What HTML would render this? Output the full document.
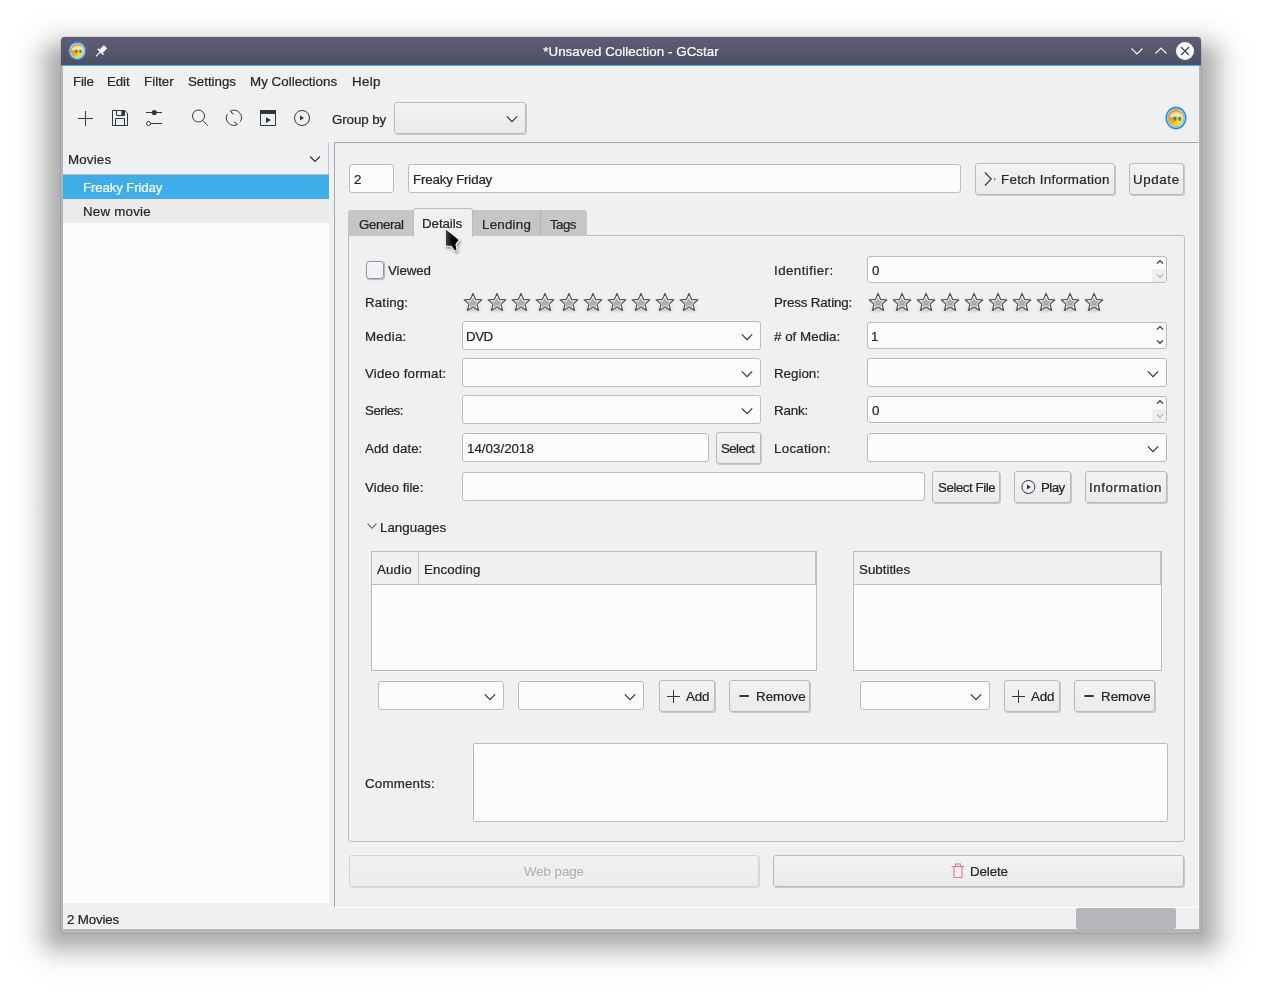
<!DOCTYPE html>
<html lang="en">
<head>
<meta charset="utf-8">
<title>*Unsaved Collection - GCstar</title>
<style>
*{box-sizing:border-box;margin:0;padding:0}
html,body{width:1262px;height:994px;overflow:hidden;background:#fff}
body{position:relative;font-family:"Liberation Sans",sans-serif;font-size:13.33px;color:#232627;line-height:16px}
.abs{position:absolute}
.t{position:absolute;white-space:pre;height:16px;line-height:16px;will-change:transform;-webkit-text-stroke:.22px}
#frame{left:61px;top:37px;width:1140px;height:896px;border-radius:4px 4px 3px 3px;background:#b2b5ba;box-shadow:0 0 0 1px rgba(0,0,0,.085)}
#titlebar{left:61px;top:37px;width:1140px;height:29px;border-radius:4px 4px 0 0;background:linear-gradient(#5e5f76,#4e4f63);border-bottom:1px solid #3daee9}
#win{left:63px;top:66px;width:1136px;height:863px;background:#eff0f1}
.entry{background:#fcfcfc;border:1px solid #bbbcbe;border-radius:3px}
.btn{border:1px solid #b9babc;border-radius:3px;background:linear-gradient(#f2f3f4,#e9eaeb);box-shadow:1px 1px 0 rgba(0,0,0,.16)}
</style>
</head>
<body>
<div class="abs" style="left:0px;top:64px;width:64px;height:866px;background:linear-gradient(to left,rgba(0,0,0,0.310) 0px,rgba(0,0,0,0.302) 4px,rgba(0,0,0,0.280) 8px,rgba(0,0,0,0.248) 12px,rgba(0,0,0,0.208) 16px,rgba(0,0,0,0.166) 20px,rgba(0,0,0,0.126) 24px,rgba(0,0,0,0.091) 28px,rgba(0,0,0,0.063) 32px,rgba(0,0,0,0.041) 36px,rgba(0,0,0,0.025) 40px,rgba(0,0,0,0.015) 44px,rgba(0,0,0,0.008) 48px,rgba(0,0,0,0.005) 52px,rgba(0,0,0,0.002) 56px,rgba(0,0,0,0.001) 60px,rgba(0,0,0,0.000) 64px)"></div>
<div class="abs" style="left:1198px;top:64px;width:64px;height:866px;background:linear-gradient(to right,rgba(0,0,0,0.310) 0px,rgba(0,0,0,0.302) 4px,rgba(0,0,0,0.280) 8px,rgba(0,0,0,0.248) 12px,rgba(0,0,0,0.208) 16px,rgba(0,0,0,0.166) 20px,rgba(0,0,0,0.126) 24px,rgba(0,0,0,0.091) 28px,rgba(0,0,0,0.063) 32px,rgba(0,0,0,0.041) 36px,rgba(0,0,0,0.025) 40px,rgba(0,0,0,0.015) 44px,rgba(0,0,0,0.008) 48px,rgba(0,0,0,0.005) 52px,rgba(0,0,0,0.002) 56px,rgba(0,0,0,0.001) 60px,rgba(0,0,0,0.000) 64px)"></div>
<div class="abs" style="left:64px;top:0px;width:1134px;height:64px;background:linear-gradient(to top,rgba(0,0,0,0.310) 0px,rgba(0,0,0,0.302) 4px,rgba(0,0,0,0.280) 8px,rgba(0,0,0,0.248) 12px,rgba(0,0,0,0.208) 16px,rgba(0,0,0,0.166) 20px,rgba(0,0,0,0.126) 24px,rgba(0,0,0,0.091) 28px,rgba(0,0,0,0.063) 32px,rgba(0,0,0,0.041) 36px,rgba(0,0,0,0.025) 40px,rgba(0,0,0,0.015) 44px,rgba(0,0,0,0.008) 48px,rgba(0,0,0,0.005) 52px,rgba(0,0,0,0.002) 56px,rgba(0,0,0,0.001) 60px,rgba(0,0,0,0.000) 64px)"></div>
<div class="abs" style="left:64px;top:930px;width:1134px;height:64px;background:linear-gradient(to bottom,rgba(0,0,0,0.310) 0px,rgba(0,0,0,0.302) 4px,rgba(0,0,0,0.280) 8px,rgba(0,0,0,0.248) 12px,rgba(0,0,0,0.208) 16px,rgba(0,0,0,0.166) 20px,rgba(0,0,0,0.126) 24px,rgba(0,0,0,0.091) 28px,rgba(0,0,0,0.063) 32px,rgba(0,0,0,0.041) 36px,rgba(0,0,0,0.025) 40px,rgba(0,0,0,0.015) 44px,rgba(0,0,0,0.008) 48px,rgba(0,0,0,0.005) 52px,rgba(0,0,0,0.002) 56px,rgba(0,0,0,0.001) 60px,rgba(0,0,0,0.000) 64px)"></div>
<div class="abs" style="left:0px;top:0px;width:64px;height:64px;background:radial-gradient(circle 64px at 100% 100%,rgba(0,0,0,0.310) 0px,rgba(0,0,0,0.302) 4px,rgba(0,0,0,0.280) 8px,rgba(0,0,0,0.248) 12px,rgba(0,0,0,0.208) 16px,rgba(0,0,0,0.166) 20px,rgba(0,0,0,0.126) 24px,rgba(0,0,0,0.091) 28px,rgba(0,0,0,0.063) 32px,rgba(0,0,0,0.041) 36px,rgba(0,0,0,0.025) 40px,rgba(0,0,0,0.015) 44px,rgba(0,0,0,0.008) 48px,rgba(0,0,0,0.005) 52px,rgba(0,0,0,0.002) 56px,rgba(0,0,0,0.001) 60px,rgba(0,0,0,0.000) 64px)"></div>
<div class="abs" style="left:1198px;top:0px;width:64px;height:64px;background:radial-gradient(circle 64px at 0 100%,rgba(0,0,0,0.310) 0px,rgba(0,0,0,0.302) 4px,rgba(0,0,0,0.280) 8px,rgba(0,0,0,0.248) 12px,rgba(0,0,0,0.208) 16px,rgba(0,0,0,0.166) 20px,rgba(0,0,0,0.126) 24px,rgba(0,0,0,0.091) 28px,rgba(0,0,0,0.063) 32px,rgba(0,0,0,0.041) 36px,rgba(0,0,0,0.025) 40px,rgba(0,0,0,0.015) 44px,rgba(0,0,0,0.008) 48px,rgba(0,0,0,0.005) 52px,rgba(0,0,0,0.002) 56px,rgba(0,0,0,0.001) 60px,rgba(0,0,0,0.000) 64px)"></div>
<div class="abs" style="left:0px;top:930px;width:64px;height:64px;background:radial-gradient(circle 64px at 100% 0,rgba(0,0,0,0.310) 0px,rgba(0,0,0,0.302) 4px,rgba(0,0,0,0.280) 8px,rgba(0,0,0,0.248) 12px,rgba(0,0,0,0.208) 16px,rgba(0,0,0,0.166) 20px,rgba(0,0,0,0.126) 24px,rgba(0,0,0,0.091) 28px,rgba(0,0,0,0.063) 32px,rgba(0,0,0,0.041) 36px,rgba(0,0,0,0.025) 40px,rgba(0,0,0,0.015) 44px,rgba(0,0,0,0.008) 48px,rgba(0,0,0,0.005) 52px,rgba(0,0,0,0.002) 56px,rgba(0,0,0,0.001) 60px,rgba(0,0,0,0.000) 64px)"></div>
<div class="abs" style="left:1198px;top:930px;width:64px;height:64px;background:radial-gradient(circle 64px at 0 0,rgba(0,0,0,0.310) 0px,rgba(0,0,0,0.302) 4px,rgba(0,0,0,0.280) 8px,rgba(0,0,0,0.248) 12px,rgba(0,0,0,0.208) 16px,rgba(0,0,0,0.166) 20px,rgba(0,0,0,0.126) 24px,rgba(0,0,0,0.091) 28px,rgba(0,0,0,0.063) 32px,rgba(0,0,0,0.041) 36px,rgba(0,0,0,0.025) 40px,rgba(0,0,0,0.015) 44px,rgba(0,0,0,0.008) 48px,rgba(0,0,0,0.005) 52px,rgba(0,0,0,0.002) 56px,rgba(0,0,0,0.001) 60px,rgba(0,0,0,0.000) 64px)"></div>
<div class="abs" id="frame"></div>
<div class="abs" id="titlebar"></div>
<div class="abs" id="win"></div>
<svg class="abs" width="0" height="0" style="left:0;top:0"><defs>
<linearGradient id="sg" x1="0.1" y1="0.25" x2="0.8" y2="0.9"><stop offset="0" stop-color="#ff8400"/><stop offset=".5" stop-color="#ffae00"/><stop offset=".8" stop-color="#ffdd22"/><stop offset="1" stop-color="#ffe21a"/></linearGradient>
<linearGradient id="sh" x1="0" y1="0" x2="0" y2="1"><stop offset="0" stop-color="#fff" stop-opacity=".55"/><stop offset="1" stop-color="#fff" stop-opacity=".8"/></linearGradient>
<g id="sonny"><circle cx="12" cy="12" r="9.75" fill="#eaf4ff" stroke="#1e88f0" stroke-width="1.5"/>
<circle cx="12" cy="12" r="8.1" fill="none" stroke="#3a96f2" stroke-width=".8"/>
<circle cx="12" cy="12" r="7.5" fill="url(#sg)"/>
<path d="M5.4 11.6 A6.7 6.7 0 0 1 18.6 11.6 C15 10.6 9 10.6 5.4 11.6 Z" fill="url(#sh)"/>
<ellipse cx="10.9" cy="12.6" rx="1.3" ry="2" fill="#1c80ea"/>
<ellipse cx="15.7" cy="12.6" rx="1.3" ry="2" fill="#1c80ea"/></g>
<linearGradient id="stg" x1="0" y1="0" x2="0" y2="1"><stop offset="0" stop-color="#d0d0d0"/><stop offset=".5" stop-color="#adadad"/><stop offset="1" stop-color="#a4a4a4"/></linearGradient>
<radialGradient id="sts" cx=".5" cy=".5" r=".5"><stop offset="0" stop-color="#000" stop-opacity=".13"/><stop offset=".6" stop-color="#000" stop-opacity=".07"/><stop offset="1" stop-color="#000" stop-opacity="0"/></radialGradient>
<g id="star"><ellipse cx="11" cy="18.6" rx="10" ry="4.2" fill="url(#sts)"/>
<path d="M11 2.4 L13.5 8.35 L19.9 8.9 L15.05 13.1 L16.5 19.4 L11 16.05 L5.5 19.4 L6.95 13.1 L2.1 8.9 L8.5 8.35 Z" fill="url(#stg)" stroke="#585858" stroke-width="1.25" stroke-linejoin="round"/>
<path d="M11 5.2 L12.75 9.4 L17.2 9.8 L13.8 12.7 L14.85 17.1 L11 14.75 L7.15 17.1 L8.2 12.7 L4.8 9.8 L9.25 9.4 Z" fill="none" stroke="#fff" stroke-opacity=".75" stroke-width=".9" stroke-linejoin="round"/></g>
</defs></svg>
<!-- title bar -->
<svg class="abs" style="left:67.1px;top:40.3px" width="20.6" height="21.7" viewBox="0 0 24 24" preserveAspectRatio="none"><use href="#sonny"/></svg>
<svg class="abs" style="left:92px;top:42px" width="18" height="18" viewBox="0 0 18 18"><g transform="translate(-0.4 0.7) rotate(45 9 9) translate(9 9) scale(.9) translate(-9 -9)" fill="#fcfcfc"><rect x="6.4" y="1.2" width="5.2" height="7.2" rx=".6"/><rect x="4.4" y="8.2" width="9.2" height="1.6"/><rect x="8.3" y="9.6" width="1.4" height="6.8"/></g></svg>
<div class="t" style="left:61px;top:44px;color:#fcfcfc;width:1140px;text-align:center;letter-spacing:.05px">*Unsaved Collection - GCstar</div>
<svg class="abs" style="left:1128px;top:42px" width="18" height="18" viewBox="0 0 18 18"><path d="M3.5 6.5 L9 12 L14.5 6.5" fill="none" stroke="#fcfcfc" stroke-width="1.1"/></svg>
<svg class="abs" style="left:1152px;top:42px" width="18" height="18" viewBox="0 0 18 18"><path d="M3.5 11.5 L9 6 L14.5 11.5" fill="none" stroke="#fcfcfc" stroke-width="1.1"/></svg>
<svg class="abs" style="left:1176px;top:42px" width="18" height="18" viewBox="0 0 18 18"><circle cx="9" cy="9" r="9" fill="#fcfcfc"/><path d="M5 5 L13 13 M13 5 L5 13" fill="none" stroke="#3b3c4e" stroke-width="1.1"/></svg>
<!-- menu bar -->
<div class="t" style="left:72.50px;top:74px;letter-spacing:-0.188px">File</div>
<div class="t" style="left:106.50px;top:74px;letter-spacing:-0.121px">Edit</div>
<div class="t" style="left:143.50px;top:74px;letter-spacing:0.024px">Filter</div>
<div class="t" style="left:188.40px;top:74px;letter-spacing:-0.028px">Settings</div>
<div class="t" style="left:250.40px;top:74px;letter-spacing:0.039px">My Collections</div>
<div class="t" style="left:351.50px;top:74px;letter-spacing:0.334px">Help</div>
<!-- toolbar -->
<svg class="abs" style="left:70px;top:100px" width="250" height="36" viewBox="70 100 250 36"><path d="M85.5 111 V126 M78 118.5 H93" stroke="#31363b" stroke-width="1" fill="none"/><path d="M112.5 110.5 H124.8 L127.5 113.2 V125.5 H112.5 Z M116.5 110.5 V115.5 H124.5 V110.5 M115.5 125.5 V118.5 H124.5 V125.5" stroke="#31363b" stroke-width="1" fill="none"/><rect x="121.3" y="111" width="2.7" height="4.2" fill="#31363b"/><path d="M146 112.5 H162 M151 123.5 H162" stroke="#31363b" stroke-width="1" fill="none"/><circle cx="154.3" cy="112.5" r="2.6" fill="#31363b"/><circle cx="148.5" cy="123.5" r="2" stroke="#31363b" stroke-width="1" fill="none"/><circle cx="198.5" cy="116" r="6" stroke="#31363b" stroke-width="1" fill="none"/><path d="M202.6 120.3 L208 125.8" stroke="#31363b" stroke-width="1" fill="none"/><path d="M233.8 114.3 L230.15 111.3 A7.5 7.5 0 0 1 240.33 121.66 M227.32 114.2 A7.5 7.5 0 0 0 237.49 124.38 L234.2 121.8" stroke="#31363b" stroke-width="1" fill="none"/><rect x="260.5" y="110.5" width="15" height="15" stroke="#31363b" stroke-width="1" fill="none"/><rect x="260" y="110" width="16" height="4" fill="#31363b"/><path d="M266 117.2 L271 120.1 L266 123 Z" fill="#31363b"/><circle cx="302" cy="118" r="7.5" stroke="#31363b" stroke-width="1" fill="none"/><path d="M300 115.4 L304 118 L300 120.6 Z" fill="#31363b"/></svg>
<div class="t" style="left:331.60px;top:112px;letter-spacing:-0.094px">Group by</div>
<div class="abs btn" style="left:394px;top:102px;width:132px;height:32px;"></div>
<svg class="abs" style="left:504px;top:110.7px" width="16" height="16" viewBox="0 0 16 16"><path d="M2.8 5.4 L8 10.6 L13.2 5.4" fill="none" stroke="#31363b" stroke-width="1.2"/></svg>
<svg class="abs" style="left:1164.3px;top:104.8px" width="24" height="26" viewBox="0 0 24 24" preserveAspectRatio="none"><use href="#sonny"/></svg>
<!-- left panel -->
<div class="abs" style="left:63px;top:143px;width:266px;height:760px;background:#fcfcfc"></div>
<div class="abs" style="left:63px;top:143px;width:266px;height:32px;background:#eff0f1;border-bottom:1px solid #b9babc"></div>
<div class="t" style="left:68.30px;top:152px;letter-spacing:0.169px">Movies</div>
<svg class="abs" style="left:307px;top:150.5px" width="16" height="16" viewBox="0 0 16 16"><path d="M3 5.5 L8 10.5 L13 5.5" fill="none" stroke="#31363b" stroke-width="1.2"/></svg>
<div class="abs" style="left:63px;top:175px;width:266px;height:24px;background:#3daee9"></div>
<div class="t" style="left:82.50px;top:180px;letter-spacing:-0.175px;color:#fcfcfc">Freaky Friday</div>
<div class="abs" style="left:63px;top:199px;width:266px;height:24px;background:#ebebeb"></div>
<div class="t" style="left:82.50px;top:204px;letter-spacing:0.224px">New movie</div>
<div class="abs" style="left:328px;top:142px;width:1px;height:32px;background:#c4c6c9"></div>
<div class="abs" style="left:334px;top:142px;width:865px;height:766px;border-left:1px solid #a6a9ad;border-top:1px solid #a6a9ad;border-right:1px solid #fff;border-bottom:1px solid #fff;background:#eff0f1"></div>
<!-- item header -->
<div class="abs entry" style="left:349px;top:164px;width:45px;height:29px;"></div>
<div class="t" style="left:353.90px;top:172px">2</div>
<div class="abs entry" style="left:408px;top:164px;width:553px;height:29px;"></div>
<div class="t" style="left:412.90px;top:172px;letter-spacing:-0.183px">Freaky Friday</div>
<div class="abs btn" style="left:975px;top:163px;width:140px;height:32px;"></div>
<svg class="abs" style="left:981px;top:171px" width="16" height="16" viewBox="0 0 16 16"><path d="M3.9 1.5 L10.3 8 L3.9 14.5" fill="none" stroke="#31363b" stroke-width="1.1"/><rect x="13" y="7.4" width="1.3" height="1.3" fill="#31363b"/></svg>
<div class="t" style="left:1001.40px;top:172px;letter-spacing:0.288px">Fetch Information</div>
<div class="abs btn" style="left:1129px;top:163px;width:55px;height:32px;"></div>
<div class="t" style="left:1133.40px;top:172px;letter-spacing:0.627px">Update</div>
<!-- notebook -->
<div class="abs" style="left:348px;top:235px;width:837px;height:607px;border:1px solid #bbbcbe;border-radius:0 3px 3px 3px"></div>
<div class="abs" style="left:348px;top:210px;width:66px;height:26px;background:#c5c6c8;border-radius:3px 0 0 0"></div>
<div class="abs" style="left:472px;top:210px;width:69px;height:26px;background:#c5c6c8;border-right:1px solid #b2b3b5"></div>
<div class="abs" style="left:541px;top:210px;width:46px;height:26px;background:#c5c6c8;border-radius:0 3px 0 0"></div>
<div class="abs" style="left:413px;top:208px;width:60px;height:29px;background:#eff0f1;border:1px solid #bbbcbe;border-bottom:none;border-radius:3px 3px 0 0"></div>
<div class="t" style="left:358.50px;top:217px;letter-spacing:-0.409px">General</div>
<div class="t" style="left:422.40px;top:216px;letter-spacing:-0.079px">Details</div>
<div class="t" style="left:481.60px;top:217px;letter-spacing:0.229px">Lending</div>
<div class="t" style="left:550.10px;top:217px;letter-spacing:-0.563px">Tags</div>
<!-- details form -->
<div class="abs" style="left:366px;top:261px;width:17.5px;height:17.5px;border:1px solid #90949a;border-radius:3.5px;background:linear-gradient(#f3f4f5,#eeeff0);box-shadow:.7px .7px 1px rgba(0,0,0,.25)"></div>
<div class="t" style="left:388.10px;top:263px;letter-spacing:-0.112px">Viewed</div>
<div class="t" style="left:773.50px;top:263px;letter-spacing:0.438px">Identifier:</div>
<div class="abs entry" style="left:867px;top:256px;width:300px;height:27px;"></div>
<div class="abs" style="left:1152px;top:269.0px;width:14px;height:13.0px;background:#eeeff0;border-radius:0 0 2px 0"></div>
<svg class="abs" style="left:1155px;top:258.0px" width="10" height="8" viewBox="0 0 10 8"><path d="M2 5.6 L5 2.6 L8 5.6" fill="none" stroke="#31363b" stroke-width="1.3"/></svg>
<svg class="abs" style="left:1155px;top:271.5px" width="10" height="8" viewBox="0 0 10 8"><path d="M2 2.4 L5 5.4 L8 2.4" fill="none" stroke="#b3b4b6" stroke-width="1.3"/></svg>
<div class="t" style="left:871.50px;top:263px">0</div>
<div class="t" style="left:364.50px;top:295px;letter-spacing:0.129px">Rating:</div>
<svg class="abs" style="left:462px;top:291px" width="22" height="24" viewBox="0 0 22 24"><use href="#star"/></svg>
<svg class="abs" style="left:486px;top:291px" width="22" height="24" viewBox="0 0 22 24"><use href="#star"/></svg>
<svg class="abs" style="left:510px;top:291px" width="22" height="24" viewBox="0 0 22 24"><use href="#star"/></svg>
<svg class="abs" style="left:534px;top:291px" width="22" height="24" viewBox="0 0 22 24"><use href="#star"/></svg>
<svg class="abs" style="left:558px;top:291px" width="22" height="24" viewBox="0 0 22 24"><use href="#star"/></svg>
<svg class="abs" style="left:582px;top:291px" width="22" height="24" viewBox="0 0 22 24"><use href="#star"/></svg>
<svg class="abs" style="left:606px;top:291px" width="22" height="24" viewBox="0 0 22 24"><use href="#star"/></svg>
<svg class="abs" style="left:630px;top:291px" width="22" height="24" viewBox="0 0 22 24"><use href="#star"/></svg>
<svg class="abs" style="left:654px;top:291px" width="22" height="24" viewBox="0 0 22 24"><use href="#star"/></svg>
<svg class="abs" style="left:678px;top:291px" width="22" height="24" viewBox="0 0 22 24"><use href="#star"/></svg>
<div class="t" style="left:773.50px;top:295px;letter-spacing:-0.150px">Press Rating:</div>
<svg class="abs" style="left:867px;top:291px" width="22" height="24" viewBox="0 0 22 24"><use href="#star"/></svg>
<svg class="abs" style="left:891px;top:291px" width="22" height="24" viewBox="0 0 22 24"><use href="#star"/></svg>
<svg class="abs" style="left:915px;top:291px" width="22" height="24" viewBox="0 0 22 24"><use href="#star"/></svg>
<svg class="abs" style="left:939px;top:291px" width="22" height="24" viewBox="0 0 22 24"><use href="#star"/></svg>
<svg class="abs" style="left:963px;top:291px" width="22" height="24" viewBox="0 0 22 24"><use href="#star"/></svg>
<svg class="abs" style="left:987px;top:291px" width="22" height="24" viewBox="0 0 22 24"><use href="#star"/></svg>
<svg class="abs" style="left:1011px;top:291px" width="22" height="24" viewBox="0 0 22 24"><use href="#star"/></svg>
<svg class="abs" style="left:1035px;top:291px" width="22" height="24" viewBox="0 0 22 24"><use href="#star"/></svg>
<svg class="abs" style="left:1059px;top:291px" width="22" height="24" viewBox="0 0 22 24"><use href="#star"/></svg>
<svg class="abs" style="left:1083px;top:291px" width="22" height="24" viewBox="0 0 22 24"><use href="#star"/></svg>
<div class="t" style="left:364.50px;top:329px;letter-spacing:0.260px">Media:</div>
<div class="abs entry" style="left:462px;top:321px;width:299px;height:29px;"></div>
<svg class="abs" style="left:739px;top:328.5px" width="16" height="16" viewBox="0 0 16 16"><path d="M2.8 5.4 L8 10.6 L13.2 5.4" fill="none" stroke="#31363b" stroke-width="1.2"/></svg>
<div class="t" style="left:465.70px;top:329px;letter-spacing:-0.457px">DVD</div>
<div class="t" style="left:774.30px;top:329px;letter-spacing:0.027px"># of Media:</div>
<div class="abs entry" style="left:867px;top:322px;width:300px;height:27px;"></div>
<svg class="abs" style="left:1155px;top:324.0px" width="10" height="8" viewBox="0 0 10 8"><path d="M2 5.6 L5 2.6 L8 5.6" fill="none" stroke="#31363b" stroke-width="1.3"/></svg>
<svg class="abs" style="left:1155px;top:337.5px" width="10" height="8" viewBox="0 0 10 8"><path d="M2 2.4 L5 5.4 L8 2.4" fill="none" stroke="#31363b" stroke-width="1.3"/></svg>
<div class="t" style="left:870.50px;top:329px">1</div>
<div class="t" style="left:365.30px;top:366px;letter-spacing:0.190px">Video format:</div>
<div class="abs entry" style="left:462px;top:358px;width:299px;height:29px;"></div>
<svg class="abs" style="left:739px;top:365.5px" width="16" height="16" viewBox="0 0 16 16"><path d="M2.8 5.4 L8 10.6 L13.2 5.4" fill="none" stroke="#31363b" stroke-width="1.2"/></svg>
<div class="t" style="left:773.50px;top:366px;letter-spacing:-0.006px">Region:</div>
<div class="abs entry" style="left:867px;top:358px;width:300px;height:29px;"></div>
<svg class="abs" style="left:1145px;top:365.5px" width="16" height="16" viewBox="0 0 16 16"><path d="M2.8 5.4 L8 10.6 L13.2 5.4" fill="none" stroke="#31363b" stroke-width="1.2"/></svg>
<div class="t" style="left:365.20px;top:403px;letter-spacing:-0.513px">Series:</div>
<div class="abs entry" style="left:462px;top:395px;width:299px;height:29px;"></div>
<svg class="abs" style="left:739px;top:402.5px" width="16" height="16" viewBox="0 0 16 16"><path d="M2.8 5.4 L8 10.6 L13.2 5.4" fill="none" stroke="#31363b" stroke-width="1.2"/></svg>
<div class="t" style="left:773.50px;top:403px;letter-spacing:-0.154px">Rank:</div>
<div class="abs entry" style="left:867px;top:396px;width:300px;height:27px;"></div>
<div class="abs" style="left:1152px;top:409.0px;width:14px;height:13.0px;background:#eeeff0;border-radius:0 0 2px 0"></div>
<svg class="abs" style="left:1155px;top:398.0px" width="10" height="8" viewBox="0 0 10 8"><path d="M2 5.6 L5 2.6 L8 5.6" fill="none" stroke="#31363b" stroke-width="1.3"/></svg>
<svg class="abs" style="left:1155px;top:411.5px" width="10" height="8" viewBox="0 0 10 8"><path d="M2 2.4 L5 5.4 L8 2.4" fill="none" stroke="#b3b4b6" stroke-width="1.3"/></svg>
<div class="t" style="left:871.50px;top:403px">0</div>
<div class="t" style="left:365.20px;top:441px;letter-spacing:0.030px">Add date:</div>
<div class="abs entry" style="left:462px;top:433px;width:247px;height:29px;"></div>
<div class="t" style="left:466.70px;top:441px;letter-spacing:0.012px">14/03/2018</div>
<div class="abs btn" style="left:716px;top:432px;width:45px;height:32px;"></div>
<div class="t" style="left:721.20px;top:441px;letter-spacing:-0.608px">Select</div>
<div class="t" style="left:773.50px;top:441px;letter-spacing:0.289px">Location:</div>
<div class="abs entry" style="left:867px;top:433px;width:300px;height:29px;"></div>
<svg class="abs" style="left:1145px;top:440.5px" width="16" height="16" viewBox="0 0 16 16"><path d="M2.8 5.4 L8 10.6 L13.2 5.4" fill="none" stroke="#31363b" stroke-width="1.2"/></svg>
<div class="t" style="left:365.20px;top:480px;letter-spacing:0.021px">Video file:</div>
<div class="abs entry" style="left:462px;top:472px;width:463px;height:29px;"></div>
<div class="abs btn" style="left:932px;top:471px;width:68px;height:32px;"></div>
<div class="t" style="left:937.60px;top:480px;letter-spacing:-0.451px">Select File</div>
<div class="abs btn" style="left:1014px;top:471px;width:57px;height:32px;"></div>
<svg class="abs" style="left:1020px;top:479px" width="16" height="16" viewBox="0 0 16 16"><circle cx="8.4" cy="8" r="6.5" fill="none" stroke="#31363b" stroke-width="1"/><path d="M7 5.6 L10.8 8 L7 10.4 Z" fill="#31363b"/></svg>
<div class="t" style="left:1040.50px;top:480px;letter-spacing:-0.554px">Play</div>
<div class="abs btn" style="left:1085px;top:471px;width:82px;height:32px;"></div>
<div class="t" style="left:1089.40px;top:480px;letter-spacing:0.574px">Information</div>
<svg class="abs" style="left:364px;top:518.4px" width="16" height="16" viewBox="0 0 16 16"><path d="M3.5999999999999996 5.8 L8 10.2 L12.4 5.8" fill="none" stroke="#6d7378" stroke-width="1.25"/></svg>
<div class="t" style="left:379.80px;top:520px;letter-spacing:0.013px">Languages</div>
<div class="abs" style="left:371px;top:551px;width:446px;height:120px;background:#fcfcfc;border:1px solid #bbbcbe"></div>
<div class="abs" style="left:372px;top:552px;width:444px;height:33px;background:#eff0f1;border-bottom:1px solid #bbbcbe;border-right:1px solid #bdbec0"></div>
<div class="abs" style="left:418px;top:552px;width:1px;height:32px;background:#c3c4c6"></div>
<div class="t" style="left:377.20px;top:562px;letter-spacing:0.156px">Audio</div>
<div class="t" style="left:423.70px;top:562px;letter-spacing:0.119px">Encoding</div>
<div class="abs" style="left:853px;top:551px;width:309px;height:120px;background:#fcfcfc;border:1px solid #bbbcbe"></div>
<div class="abs" style="left:854px;top:552px;width:307px;height:33px;background:#eff0f1;border-bottom:1px solid #bbbcbe;border-right:1px solid #bdbec0"></div>
<div class="t" style="left:859.30px;top:562px;letter-spacing:0.006px">Subtitles</div>
<div class="abs entry" style="left:378px;top:681px;width:126px;height:29px;"></div>
<svg class="abs" style="left:482px;top:688.5px" width="16" height="16" viewBox="0 0 16 16"><path d="M2.8 5.4 L8 10.6 L13.2 5.4" fill="none" stroke="#31363b" stroke-width="1.2"/></svg>
<div class="abs entry" style="left:518px;top:681px;width:126px;height:29px;"></div>
<svg class="abs" style="left:622px;top:688.5px" width="16" height="16" viewBox="0 0 16 16"><path d="M2.8 5.4 L8 10.6 L13.2 5.4" fill="none" stroke="#31363b" stroke-width="1.2"/></svg>
<div class="abs btn" style="left:659px;top:680px;width:56px;height:32px;"></div>
<svg class="abs" style="left:665px;top:688px" width="16" height="16" viewBox="0 0 16 16"><path d="M8.5 2 V15 M2 8.5 H15" stroke="#31363b" stroke-width="1" fill="none"/></svg>
<div class="t" style="left:686.40px;top:689px;letter-spacing:-0.201px">Add</div>
<div class="abs btn" style="left:729px;top:680px;width:81px;height:32px;"></div>
<svg class="abs" style="left:735px;top:688px" width="16" height="16" viewBox="0 0 16 16"><rect x="4.4" y="7" width="9.4" height="2" fill="#31363b"/></svg>
<div class="t" style="left:755.60px;top:689px;letter-spacing:0.017px">Remove</div>
<div class="abs entry" style="left:860px;top:681px;width:130px;height:29px;"></div>
<svg class="abs" style="left:968px;top:688.5px" width="16" height="16" viewBox="0 0 16 16"><path d="M2.8 5.4 L8 10.6 L13.2 5.4" fill="none" stroke="#31363b" stroke-width="1.2"/></svg>
<div class="abs btn" style="left:1004px;top:680px;width:56px;height:32px;"></div>
<svg class="abs" style="left:1010px;top:688px" width="16" height="16" viewBox="0 0 16 16"><path d="M8.5 2 V15 M2 8.5 H15" stroke="#31363b" stroke-width="1" fill="none"/></svg>
<div class="t" style="left:1031.30px;top:689px;letter-spacing:-0.201px">Add</div>
<div class="abs btn" style="left:1074px;top:680px;width:81px;height:32px;"></div>
<svg class="abs" style="left:1080px;top:688px" width="16" height="16" viewBox="0 0 16 16"><rect x="4.4" y="7" width="9.4" height="2" fill="#31363b"/></svg>
<div class="t" style="left:1100.70px;top:689px;letter-spacing:0.017px">Remove</div>
<div class="t" style="left:365.40px;top:776px;letter-spacing:0.183px">Comments:</div>
<div class="abs entry" style="left:473px;top:743px;width:695px;height:79px;border-radius:2px"></div>
<div class="abs btn" style="left:349px;top:855px;width:410px;height:32px;background:linear-gradient(#f0f1f2,#ececed);box-shadow:1px 1px 0 rgba(0,0,0,.09);border-color:#d1d2d4"></div>
<div class="t" style="left:524.30px;top:864px;letter-spacing:-0.072px;color:#abb2b7;text-shadow:.6px 1px 0 rgba(255,255,255,.85)">Web page</div>
<div class="abs btn" style="left:773px;top:855px;width:411px;height:32px;"></div>
<svg class="abs" style="left:949px;top:861px" width="18" height="18" viewBox="949 861 18 18"><path d="M951.5 866.5 H964.5 M955.6 866.5 V864 H960.4 V866.5 M954 866.5 V877.4 H962 V866.5" fill="none" stroke="#e27682" stroke-width="1.05"/></svg>
<div class="t" style="left:970.20px;top:864px;letter-spacing:-0.103px">Delete</div>
<!-- status bar -->
<div class="t" style="left:67.30px;top:912px;letter-spacing:-0.153px">2 Movies</div>
<div class="abs" style="left:1076px;top:908px;width:100px;height:21px;background:#b5b6b9;border-radius:3px"></div>
<svg class="abs" style="left:436px;top:220px" width="34" height="42" viewBox="436 220 34 42"><defs><filter id="cb" x="-40%" y="-40%" width="180%" height="180%"><feGaussianBlur stdDeviation="1.6"/></filter><linearGradient id="cg" x1="0" y1="0" x2="1" y2="0"><stop offset="0" stop-color="#4a4a4a"/><stop offset=".55" stop-color="#000"/></linearGradient></defs><path d="M446 230 L446 248.5 L452 248.5 L455.3 253 L458.5 253 L457.3 246.3 L461 241.7 Z" fill="#000" opacity=".45" filter="url(#cb)"/><path d="M445.3 228.3 L445.3 246.2 L451 246.2 L454.3 250.7 L457.2 250.7 L456 244.3 L459.5 239.8 Z" fill="url(#cg)" stroke="#fff" stroke-width="1.1" stroke-linejoin="round"/></svg>
</body>
</html>
